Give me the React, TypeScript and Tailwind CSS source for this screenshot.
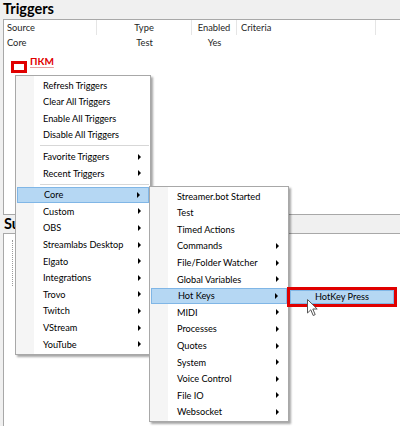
import React from "react";

type It = { label: string; arrow?: boolean; hl?: boolean } | "sep";

const menu1: It[] = [
  { label: "Refresh Triggers" },
  { label: "Clear All Triggers" },
  { label: "Enable All Triggers" },
  { label: "Disable All Triggers" },
  "sep",
  { label: "Favorite Triggers", arrow: true },
  { label: "Recent Triggers", arrow: true },
  "sep",
  { label: "Core", arrow: true, hl: true },
  { label: "Custom", arrow: true },
  { label: "OBS", arrow: true },
  { label: "Streamlabs Desktop", arrow: true },
  { label: "Elgato", arrow: true },
  { label: "Integrations", arrow: true },
  { label: "Trovo", arrow: true },
  { label: "Twitch", arrow: true },
  { label: "VStream", arrow: true },
  { label: "YouTube", arrow: true },
];

const menu2: It[] = [
  { label: "Streamer.bot Started" },
  { label: "Test" },
  { label: "Timed Actions" },
  { label: "Commands", arrow: true },
  { label: "File/Folder Watcher", arrow: true },
  { label: "Global Variables", arrow: true },
  { label: "Hot Keys", arrow: true, hl: true },
  { label: "MIDI", arrow: true },
  { label: "Processes", arrow: true },
  { label: "Quotes", arrow: true },
  { label: "System", arrow: true },
  { label: "Voice Control", arrow: true },
  { label: "File IO", arrow: true },
  { label: "Websocket", arrow: true },
];

function Arrow() {
  return (
    <span className="absolute right-[8px] top-1/2 -translate-y-1/2 w-0 h-0 border-y-[3px] border-y-transparent border-l-[3px] border-l-black" />
  );
}

function Menu({ items, className }: { items: It[]; className: string }) {
  return (
    <div
      className={`absolute bg-white border border-[#a8a8a8] py-[1px] shadow-[2px_2px_2px_rgba(0,0,0,0.35)] ${className}`}
    >
      <div className="absolute left-0 top-0 bottom-0 w-[18px] bg-[#f5f5f5]" />
      {items.map((it, i) =>
        it === "sep" ? (
          <div key={i} className="relative h-[5px] flex items-center pl-[24px] pr-[1px]">
            <div className="h-px w-full bg-[#d7d7d7]" />
          </div>
        ) : (
          <div
            key={i}
            className={`relative mx-[1px] h-[16.6px] flex items-center pl-[26px] text-[9.2px] leading-none whitespace-nowrap ${
              it.hl ? "bg-[#b5d7f3] border border-[#80b6e6]" : ""
            }`}
          >
            {it.label}
            {it.arrow ? <Arrow /> : null}
          </div>
        )
      )}
    </div>
  );
}

export default function App() {
  return (
    <div className="relative w-[400px] h-[426px] overflow-hidden bg-[#f0f0f0] text-black [font-family:Lato,'Noto_Sans',sans-serif]">
      <div className="h-[19px] pl-[3px] text-[14.5px] font-bold leading-[17px]">Triggers</div>
      <div className="ml-[3px] w-[420px] h-[196px] border border-[#a8a8a8] bg-white">
        <div className="flex h-[15px] text-[9.3px] text-[#1e1e1e] items-center">
          <div className="w-[93px] h-full pl-[3px] flex items-center border-r border-[#e5e5e5]">Source</div>
          <div className="w-[95px] h-full flex items-center justify-center border-r border-[#e5e5e5]">Type</div>
          <div className="w-[45px] h-full flex items-center justify-center border-r border-[#e5e5e5]">Enabled</div>
          <div className="w-[139px] h-full pl-[4px] flex items-center border-r border-[#e5e5e5]">Criteria</div>
        </div>
        <div className="flex h-[15px] text-[9.3px] text-[#1e1e1e] items-center">
          <div className="w-[93px] pl-[3px]">Core</div>
          <div className="w-[95px] text-center">Test</div>
          <div className="w-[45px] text-center">Yes</div>
        </div>
      </div>
      <div className="h-[18px] pl-[4px] w-[15px] overflow-hidden whitespace-nowrap text-[14.5px] font-bold leading-[18px]">
        Sub-Actions
      </div>
      <div className="ml-[3px] w-[420px] h-[200px] border border-[#a8a8a8] bg-white pt-[6px] pl-[8px]">
        <div className="w-[3px] h-[46px] border-l border-dotted border-[#9a9a9a]" />
      </div>

      {/* right-click marker */}
      <div className="absolute left-[11px] top-[61px] w-[16px] h-[12px] border-[3px] border-[#e00000]" />
      <div className="absolute left-[30px] top-[54px] text-[10px] font-bold text-[#e00000] underline decoration-[#e8a0a0] underline-offset-2">
        ПКМ
      </div>

      <Menu items={menu1} className="left-[15px] top-[75px] w-[136px]" />
      <Menu items={menu2} className="left-[149px] top-[186px] w-[140px]" />

      {/* submenu 3 */}
      <div className="absolute left-[287px] top-[287px] w-[110px] h-[20px] bg-white border-[3px] border-[#e00000]">
        <div className="h-full bg-[#b5d7f3] border border-[#80b6e6] flex items-center pl-[24px] text-[9.2px] leading-none whitespace-nowrap">
          HotKey Press
        </div>
      </div>

      {/* cursor */}
      <svg className="absolute left-[307px] top-[299px]" width="12" height="18" viewBox="0 0 12 18">
        <path
          d="M0.5 0.5 L0.5 14 L3.8 10.8 L6.2 16.5 L8.2 15.6 L5.8 10 L10.2 10 Z"
          fill="white"
          stroke="#555"
          strokeWidth="1"
          strokeLinejoin="round"
        />
      </svg>
    </div>
  );
}
